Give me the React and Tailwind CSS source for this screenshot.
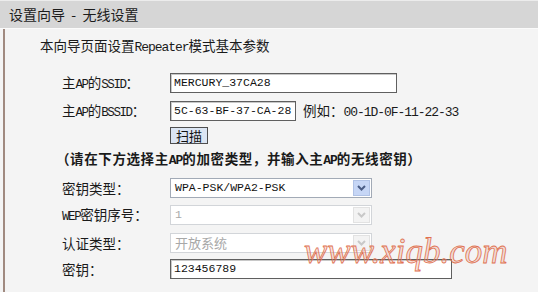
import React from 'react';

const CJK = "font-['Noto_Sans_CJK_SC',sans-serif]";

// ascii runs get a squeezed mono face, like the old SimSun half-width glyphs
function Mixed({ text, narrow }) {
  const parts = text.split(/([\x21-\x7e]+)/);
  return (
    <span>
      {parts.map((p, i) =>
        /^[\x21-\x7e]+$/.test(p) ? (
          <span
            key={i}
            className={
              narrow
                ? "font-['Liberation_Mono',monospace] text-[12.5px] tracking-[-1.4px]"
                : "font-['Liberation_Mono',monospace] text-[13px] tracking-[-1.05px]"
            }
          >
            {p}
          </span>
        ) : (
          <span key={i}>{p}</span>
        )
      )}
    </span>
  );
}

function Label({ text }) {
  return (
    <div className="w-[108px] shrink-0 text-[13.5px] text-[#1a1a1a] whitespace-nowrap">
      <Mixed text={text} narrow />
    </div>
  );
}

function TextBox({ value, width }) {
  return (
    <div
      className={`${width} h-[20px] flex items-center px-[3px] overflow-hidden whitespace-nowrap bg-white border border-[#5f5f5f] shadow-[inset_1px_1px_0_#c8c8c8] font-['Liberation_Mono',monospace] text-[11.5px] text-[#111]`}
    >
      {value}
    </div>
  );
}

function Chevron({ color }) {
  return (
    <svg width="9" height="6" viewBox="0 0 9 6">
      <path d="M1 1 L4.5 4.5 L8 1" fill="none" stroke={color} strokeWidth="2" />
    </svg>
  );
}

function Select({ value, disabled, mono }) {
  return (
    <div
      className={`w-[202px] h-[20px] flex items-center justify-between pl-[4px] pr-[1px] bg-white border ${
        disabled ? 'border-[#d2d5d9] text-[#a8a8a8]' : 'border-[#a2aab6] text-[#111]'
      } ${mono ? "font-['Liberation_Mono',monospace] text-[11.5px]" : 'text-[13px]'}`}
    >
      <span>{value}</span>
      <div
        className={`w-[17px] h-[16px] flex items-center justify-center border ${
          disabled ? 'bg-[#f3f3f3] border-[#e2e2e2]' : 'bg-[#c6d6f6] border-[#b0c2e6]'
        }`}
      >
        <Chevron color={disabled ? '#c8c8c8' : '#4a5d86'} />
      </div>
    </div>
  );
}

export default function App() {
  return (
    <div className={`relative w-[538px] h-[292px] overflow-hidden bg-[#f4f4f4] ${CJK}`}>
      {/* title bar */}
      <div className="h-[28px] bg-[#d6d6d6] border-t border-[#ececec] flex items-center pl-[9px] text-[14px] text-[#1c1c1c] whitespace-pre">
        设置向导  -  无线设置
      </div>
      <div className="h-[1px] bg-[#fbfbfb]" />

      <div className="ml-[3px] border-l-[2px] border-[#a08a80] h-[263px] pl-[35px] flex flex-col">
        <div className="h-[34px] flex items-center text-[13.5px] text-[#1a1a1a]">
          <Mixed text="本向导页面设置Repeater模式基本参数" />
        </div>

        <div className="pl-[22px] flex flex-col">
          <div className="mt-[10px] flex items-center h-[20px]">
            <Label text="主AP的SSID：" />
            <TextBox value="MERCURY_37CA28" width="w-[227px]" />
          </div>

          <div className="mt-[8px] flex items-center h-[20px]">
            <Label text="主AP的BSSID：" />
            <TextBox value="5C-63-BF-37-CA-28" width="w-[126px]" />
            <span className="ml-[7px] text-[13.5px] text-[#1a1a1a] whitespace-nowrap">
              <Mixed text="例如：00-1D-0F-11-22-33" />
            </span>
          </div>

          <div className="mt-[6px] pl-[108px] flex">
            <button className="w-[38px] h-[17px] flex items-center justify-center bg-[#dbe5f3] border border-[#4e4e4e] text-[13px] leading-none text-[#111]">
              扫描
            </button>
          </div>
        </div>

        <div className="mt-[5px] ml-[16px] h-[20px] flex items-center text-[13.5px] font-bold tracking-[0.6px] text-[#1a1a1a] whitespace-nowrap">
          <Mixed text="（请在下方选择主AP的加密类型，并输入主AP的无线密钥）" />
        </div>

        <div className="pl-[22px] flex flex-col">
          <div className="mt-[9px] flex items-center h-[20px]">
            <Label text="密钥类型：" />
            <Select value="WPA-PSK/WPA2-PSK" mono />
          </div>
          <div className="mt-[7px] flex items-center h-[20px]">
            <Label text="WEP密钥序号：" />
            <Select value="1" disabled mono />
          </div>
          <div className="mt-[8px] flex items-center h-[20px]">
            <Label text="认证类型：" />
            <Select value="开放系统" disabled />
          </div>
          <div className="mt-[6px] flex items-center h-[20px]">
            <Label text="密钥：" />
            <TextBox value="123456789" width="w-[282px]" />
          </div>
        </div>
      </div>

      {/* watermark */}
      <div className="absolute left-[304px] top-[234px] font-['Liberation_Serif',serif] italic text-[35px] leading-none text-[#e0704f]/20 [-webkit-text-stroke:0.8px_#e0704f] pointer-events-none">
        www.xiqb.com
      </div>
    </div>
  );
}
